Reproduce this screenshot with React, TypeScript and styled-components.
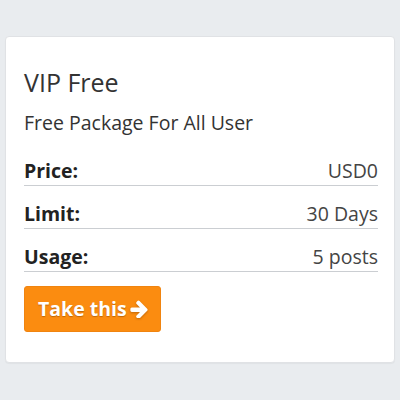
import React from "react";
import styled, { createGlobalStyle } from "styled-components";

const Global = createGlobalStyle`
  html, body { margin: 0; padding: 0; background: #e9ecef; }
  body { font-family: "Open Sans", "Noto Sans", sans-serif; color: #333; }
`;

const Page = styled.div`
  padding: 36px 5px;
`;

const Card = styled.div`
  background: #fff;
  border: 1px solid #e0e2e5;
  border-radius: 4px;
  padding: 28px 16px 30px 18px;
  box-shadow: 0 1px 1px rgba(0,0,0,0.04);
`;

const Title = styled.h3`
  margin: 0;
  font-size: 25px;
  font-weight: 400;
  line-height: 34px;
  color: #333;
`;

const Subtitle = styled.p`
  margin: 10px 0 6px;
  font-size: 19.5px;
  line-height: 28px;
  color: #333;
`;

const Row = styled.div`
  display: flex;
  justify-content: space-between;
  align-items: baseline;
  border-bottom: 1px solid #cbced2;
  padding: 14px 0 0;
  font-size: 19.5px;
  line-height: 28px;
`;

const Label = styled.span`
  font-weight: 700;
  color: #222;
`;

const Value = styled.span`
  color: #444;
`;

const Button = styled.button`
  margin-top: 14px;
  display: inline-flex;
  align-items: center;
  gap: 3px;
  background: #fb8c10;
  border: 1px solid #f08410;
  border-radius: 3px;
  color: #fff;
  font-family: "Open Sans", sans-serif;
  font-weight: 700;
  font-size: 19.5px;
  line-height: 28px;
  padding: 8px 12px 8px 13px;
  text-shadow: 0 1px 1px rgba(120,60,0,0.45);
`;

const Arrow = styled.svg`
  filter: drop-shadow(0 1px 1px rgba(120, 60, 0, 0.45));
`;

export default function App() {
  return (
    <>
      <Global />
      <Page>
        <Card>
          <Title>VIP Free</Title>
          <Subtitle>Free Package For All User</Subtitle>
          <Row><Label>Price:</Label><Value>USD0</Value></Row>
          <Row><Label>Limit:</Label><Value>30 Days</Value></Row>
          <Row><Label>Usage:</Label><Value>5 posts</Value></Row>
          <Button>
            Take this
            <Arrow width="18" height="18" viewBox="0 0 1472 1536" fill="#fff">
              <path d="M1472 832q0 54-37 91l-651 651q-39 37-91 37-51 0-90-37l-75-75q-38-38-38-91t38-91l293-293H117q-52 0-84.5-37.5T0 896V768q0-53 32.5-90.5T117 640h704L528 346q-38-36-38-90t38-90l75-75q38-38 90-38 53 0 91 38l651 651q37 35 37 90z" />
            </Arrow>
          </Button>
        </Card>
      </Page>
    </>
  );
}
